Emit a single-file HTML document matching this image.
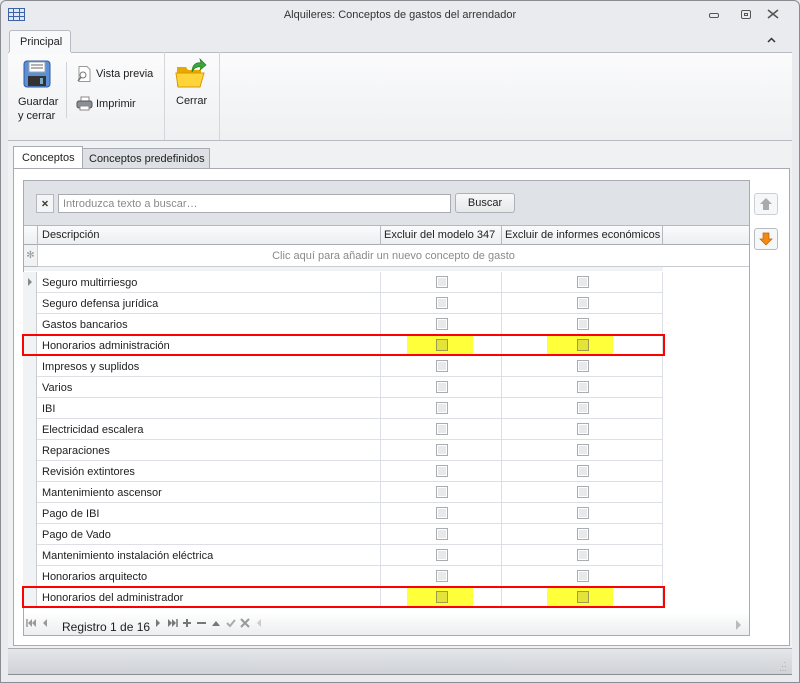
<!DOCTYPE html>
<html><head><meta charset="utf-8"><style>
*{box-sizing:border-box;margin:0;padding:0}
body{width:800px;height:683px;overflow:hidden;background:#e9ebee;font-family:"Liberation Sans",sans-serif;font-size:11px;color:#1e1e1e;position:relative}
.a{position:absolute}
.row{position:absolute;left:23px;width:640px;height:21px;border-bottom:1px solid #dcdfe3}
.ind{position:absolute;left:0;top:0;width:14px;height:21px;background:#f1f2f4;border-right:1px solid #c9ccd1}
.d{position:absolute;left:19px;top:5px;font-size:11px}
.c1{position:absolute;left:357px;top:0;width:1px;height:21px;background:#dcdfe3}
.c2{position:absolute;left:478px;top:0;width:1px;height:21px;background:#dcdfe3}
.c3{position:absolute;left:639px;top:0;width:1px;height:21px;background:#dcdfe3}
.cb{position:absolute;top:4px;width:12px;height:12px;border:1px solid #a9acb1;background:#e8e9eb;box-shadow:inset 0 0 0 1px #fff}
.hl{position:absolute;top:1px;height:19px;background:#ffff3a}
.hl .cb{background:#e3e33a;border-color:#9c9c4a;box-shadow:none;top:3px}
.red{position:absolute;left:22px;width:643px;height:22px;border:2px solid #f00}
</style></head><body>
<div class="a" style="left:0;top:0;width:800px;height:683px;border:1px solid #8a8d92;border-radius:6px 6px 0 0"></div>
<svg class="a" style="left:8px;top:8px" width="18" height="14"><rect x="0.5" y="0.5" width="16" height="12" fill="#dfe8f5" stroke="#3d63a6"/><path d="M0 4.5H17M0 8.5H17M5.5 0V13M11.5 0V13" stroke="#3d63a6"/></svg>
<div class="a" style="left:0;width:800px;top:9px;text-align:center;font-size:11px;color:#333">Alquileres: Conceptos de gastos del arrendador</div>
<div class="a" style="left:709px;top:13px;width:10px;height:5px;border:1px solid #555;border-radius:2px"></div>
<div class="a" style="left:741px;top:10px;width:10px;height:9px;border:1px solid #555;border-radius:2px"><div style="margin:2px;width:4px;height:3px;border:1px solid #555"></div></div>
<svg class="a" style="left:767px;top:9px" width="12" height="10"><path d="M1 1L11 9M11 1L1 9" stroke="#555" stroke-width="1.6"/></svg>
<svg class="a" style="left:767px;top:37px" width="9" height="6"><path d="M1 5L4.5 1.5L8 5" fill="none" stroke="#333" stroke-width="1.5"/></svg>
<div class="a" style="left:9px;top:30px;width:62px;height:23px;background:#f8f9fa;border:1px solid #b8bcc2;border-bottom:none;border-radius:3px 3px 0 0"></div>
<div class="a" style="left:20px;top:36px">Principal</div>
<div class="a" style="left:8px;top:52px;width:784px;height:89px;background:linear-gradient(#fbfbfc,#eff0f2);border-top:1px solid #b8bcc2;border-bottom:1px solid #b8bcc2"></div>
<div class="a" style="left:9px;top:52px;width:62px;height:2px;background:#f8f9fa"></div>
<svg class="a" style="left:23px;top:60px" width="28" height="28"><rect x="1" y="1" width="26" height="26" rx="3" fill="#5b8fd8" stroke="#2c5aa0"/><rect x="6" y="2" width="16" height="10" fill="#fff" stroke="#9aa"/><path d="M8 5H20M8 8H20" stroke="#666"/><rect x="5" y="16" width="18" height="10" fill="#333"/><rect x="17" y="18" width="3" height="6" fill="#7ab"/></svg>
<div class="a" style="left:18px;top:95px;line-height:14px">Guardar<br>y cerrar</div>
<div class="a" style="left:66px;top:62px;width:1px;height:56px;background:#d0d3d7"></div>
<svg class="a" style="left:77px;top:66px" width="14" height="16"><path d="M2 .5H10L13 3.5V15.5H2Z" fill="#fff" stroke="#999"/><circle cx="6" cy="9" r="3" fill="none" stroke="#777"/><path d="M4 11L1 15" stroke="#777" stroke-width="1.5"/></svg>
<div class="a" style="left:96px;top:68px">Vista previa</div>
<svg class="a" style="left:76px;top:96px" width="17" height="15"><rect x="5" y="1" width="8" height="5" fill="#fff" stroke="#888"/><rect x="1" y="5" width="15" height="7" rx="2" fill="#8a8f96" stroke="#555"/><rect x="4" y="10" width="9" height="4" fill="#fff" stroke="#888"/></svg>
<div class="a" style="left:96px;top:98px">Imprimir</div>
<div class="a" style="left:164px;top:52px;width:1px;height:88px;background:#d3d6da"></div>
<div class="a" style="left:219px;top:52px;width:1px;height:88px;background:#d3d6da"></div>
<svg class="a" style="left:175px;top:58px" width="32" height="32"><path d="M2 9H11L13 12H26V28H2Z" fill="#e8a800"/><path d="M1 15H29L25 29H3Z" fill="#ffd33a" stroke="#d99a00"/><path d="M17 14C17 6 22 4 26 5L25 1L31 7L25 12L26 9C22 8 19 10 17 14Z" fill="#3ca53c" stroke="#207a20" stroke-width=".7"/></svg>
<div class="a" style="left:176px;top:95px">Cerrar</div>
<div class="a" style="left:8px;top:141px;width:784px;height:507px;background:#f0f1f3"></div>
<div class="a" style="left:13px;top:146px;width:70px;height:23px;background:#fff;border:1px solid #a8acb2;border-bottom:none"></div>
<div class="a" style="left:22px;top:152px">Conceptos</div>
<div class="a" style="left:82px;top:148px;width:128px;height:20px;background:#dde0e4;border:1px solid #a8acb2;border-bottom:none"></div>
<div class="a" style="left:89px;top:153px">Conceptos predefinidos</div>
<div class="a" style="left:13px;top:168px;width:777px;height:478px;background:#fff;border:1px solid #a8acb2"></div>
<div class="a" style="left:23px;top:180px;width:727px;height:456px;border:1px solid #a8acb2;background:#fff"></div>
<div class="a" style="left:24px;top:181px;width:725px;height:45px;background:#dfe2e6;border-bottom:1px solid #b5b9bf"></div>
<div class="a" style="left:36px;top:194px;width:18px;height:19px;background:#f4f5f6;border:1px solid #b5b9bf"><svg width="16" height="17"><path d="M5.5 6L10.5 11M10.5 6L5.5 11" stroke="#444" stroke-width="1.5"/></svg></div>
<div class="a" style="left:58px;top:194px;width:393px;height:19px;background:#fff;border:1px solid #a8acb2;padding:3px 4px;color:#8a8a8a">Introduzca texto a buscar…</div>
<div class="a" style="left:455px;top:193px;width:60px;height:20px;background:linear-gradient(#f8f8f9,#e6e8ea);border:1px solid #aeb2b8;border-radius:3px;text-align:center;line-height:18px">Buscar</div>
<div class="a" style="left:24px;top:226px;width:725px;height:19px;background:linear-gradient(#fafbfc,#eceef1);border-bottom:1px solid #a8acb2"></div>
<div class="a" style="left:37px;top:226px;width:1px;height:19px;background:#b5b9bf"></div>
<div class="a" style="left:380px;top:226px;width:1px;height:19px;background:#b5b9bf"></div>
<div class="a" style="left:501px;top:226px;width:1px;height:19px;background:#b5b9bf"></div>
<div class="a" style="left:662px;top:226px;width:1px;height:19px;background:#b5b9bf"></div>
<div class="a" style="left:42px;top:229px">Descripción</div>
<div class="a" style="left:384px;top:229px">Excluir del modelo 347</div>
<div class="a" style="left:505px;top:229px">Excluir de informes económicos</div>
<div class="a" style="left:24px;top:245px;width:14px;height:22px;background:#f1f2f4;border-right:1px solid #c9ccd1;border-bottom:1px solid #b5b9bf;text-align:center;color:#999;font-size:10px;line-height:22px">✻</div>
<div class="a" style="left:38px;top:245px;width:711px;height:22px;border-bottom:1px solid #c9ccd1;text-align:center;line-height:22px;color:#8a8a8a">Clic aquí para añadir un nuevo concepto de gasto</div>
<div class="a" style="left:24px;top:267px;width:639px;height:4px;background:#f1f2f4"></div>
<div id="rows"></div>
<script>
var n=["Seguro multirriesgo","Seguro defensa jurídica","Gastos bancarios","Honorarios administración","Impresos y suplidos","Varios","IBI","Electricidad escalera","Reparaciones","Revisión extintores","Mantenimiento ascensor","Pago de IBI","Pago de Vado","Mantenimiento instalación eléctrica","Honorarios arquitecto","Honorarios del administrador"];
var h="";
for(var i=0;i<16;i++){var t=272+i*21;var y=(i==3||i==15);
h+='<div class="row" style="top:'+t+'px"><div class="ind">'+(i==0?'<span style="position:absolute;left:5px;top:6px;width:0;height:0;border-left:4px solid #888;border-top:4px solid transparent;border-bottom:4px solid transparent"></span>':'')+'</div><div class="d">'+n[i]+'</div><div class="c1"></div><div class="c2"></div><div class="c3"></div>';
if(y){h+='<div class="hl" style="left:384px;width:66px"><div class="cb" style="left:29px"></div></div><div class="hl" style="left:524px;width:66px"><div class="cb" style="left:30px"></div></div>';}
else{h+='<div class="cb" style="left:413px"></div><div class="cb" style="left:554px"></div>';}
h+='</div>';
if(y)h+='<div class="red" style="top:'+(t-1)+'px"></div>';}
document.getElementById("rows").outerHTML=h;
</script>
<div class="a" style="left:24px;top:612px;width:725px;height:23px;background:linear-gradient(#fff,#eceef0)"></div>
<svg class="a" style="left:26px;top:617px" width="30" height="12"><path d="M1 2V10" stroke="#999" stroke-width="1.5"/><path d="M6 2L2 6L6 10ZM10 2L6 6L10 10Z" fill="#999"/><path d="M21 2L17 6L21 10Z" fill="#999"/></svg>
<div class="a" style="left:62px;top:620px;font-size:12px">Registro 1 de 16</div>
<svg class="a" style="left:153px;top:617px" width="112" height="12"><path d="M3 2L7 6L3 10Z" fill="#777"/><path d="M15 2L19 6L15 10ZM19 2L23 6L19 10Z" fill="#777"/><path d="M24 2V10" stroke="#777" stroke-width="1.5"/><path d="M30 6H38M34 2V10" stroke="#777" stroke-width="2"/><path d="M44 6H53" stroke="#777" stroke-width="2"/><path d="M59 9L63 4L67 9Z" fill="#777"/><path d="M74 6L77 9L82 3" fill="none" stroke="#aaa" stroke-width="2"/><path d="M88 2L96 10M96 2L88 10" stroke="#999" stroke-width="2"/><path d="M108 2L104 6L108 10Z" fill="#ccc"/></svg>
<div class="a" style="left:736px;top:620px;width:0;height:0;border-left:5px solid #bbb;border-top:5px solid transparent;border-bottom:5px solid transparent"></div>
<div class="a" style="left:754px;top:193px;width:24px;height:22px;border:1px solid #ccd0d4;border-radius:3px;background:#f6f7f8"><svg width="22" height="20"><path d="M11 4L17 10H14V16H8V10H5Z" fill="#aaa"/></svg></div>
<div class="a" style="left:754px;top:228px;width:24px;height:22px;border:1px solid #b8bcc2;border-radius:3px;background:#f6f7f8"><svg width="22" height="20"><path d="M8 4H14V10H17L11 16L5 10H8Z" fill="#f08a14" stroke="#c65f00" stroke-width=".7"/></svg></div>
<div class="a" style="left:8px;top:648px;width:784px;height:27px;background:linear-gradient(#e4e6e9,#cfd2d6);border-top:1px solid #a8acb2;border-bottom:1px solid #8a8d92"></div>
<div class="a" style="left:779px;top:661px;font-size:8px;color:#999;line-height:4px">&nbsp;&nbsp;·<br>&nbsp;··<br>···</div>
</body></html>
